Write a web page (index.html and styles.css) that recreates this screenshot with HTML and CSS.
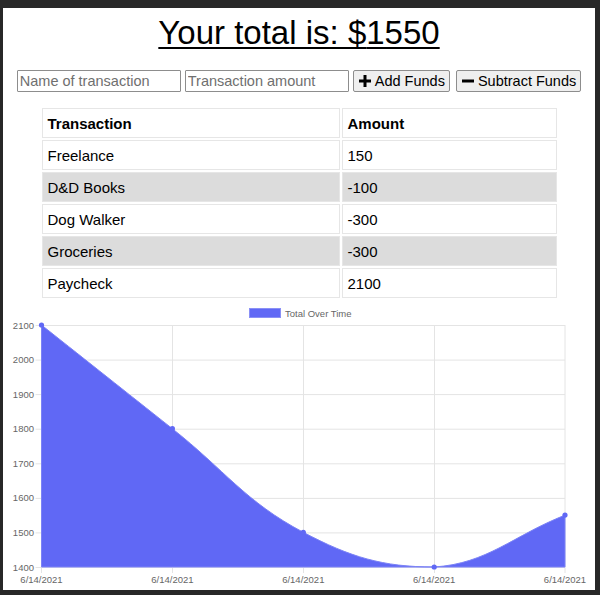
FILE: index.html
```html
<!DOCTYPE html>
<html lang="en">
<head>
<meta charset="utf-8">
<title>Budget Tracker</title>
<link rel="stylesheet" href="styles.css">
</head>
<body>
<div class="frame">
  <h1 class="total">Your total is: $<span class="amount">1550</span></h1>
  <div class="controls">
    <input class="field" type="text" placeholder="Name of transaction">
    <input class="field" type="number" placeholder="Transaction amount">
    <button class="btn btn-add"><svg class="ico" viewBox="0 0 12 12" width="12" height="12"><path d="M4.5 0h3v4.5H12v3H7.5V12h-3V7.5H0v-3h4.5z"/></svg>Add Funds</button>
    <button class="btn btn-sub"><svg class="ico" viewBox="0 0 12 12" width="12" height="12"><path d="M0 4.5h12v3H0z"/></svg>Subtract Funds</button>
  </div>
  <table class="tx">
    <thead>
      <tr><th class="c-name">Transaction</th><th class="c-amt">Amount</th></tr>
    </thead>
    <tbody>
      <tr><td>Freelance</td><td>150</td></tr>
      <tr><td>D&amp;D Books</td><td>-100</td></tr>
      <tr><td>Dog Walker</td><td>-300</td></tr>
      <tr><td>Groceries</td><td>-300</td></tr>
      <tr><td>Paycheck</td><td>2100</td></tr>
    </tbody>
  </table>
  <svg class="chart" width="592" height="290" viewBox="0 0 592 290">
    <g class="legend">
      <rect x="246.5" y="8.5" width="31" height="9" fill="#6068f5" stroke="#8a90f6" stroke-width="1"/>
      <text x="282" y="16.5" class="lbl">Total Over Time</text>
    </g>
    <g class="grid" stroke="#e4e4e4" stroke-width="1">
      <line x1="32.5" y1="25.5" x2="562" y2="25.5"/>
      <line x1="32.5" y1="60.1" x2="562" y2="60.1"/>
      <line x1="32.5" y1="94.6" x2="562" y2="94.6"/>
      <line x1="32.5" y1="129.2" x2="562" y2="129.2"/>
      <line x1="32.5" y1="163.8" x2="562" y2="163.8"/>
      <line x1="32.5" y1="198.4" x2="562" y2="198.4"/>
      <line x1="32.5" y1="232.9" x2="562" y2="232.9"/>
      <line x1="32.5" y1="267.5" x2="562" y2="267.5"/>
      <line x1="38.5" y1="25" x2="38.5" y2="273"/>
      <line x1="169.5" y1="25" x2="169.5" y2="273"/>
      <line x1="300.5" y1="25" x2="300.5" y2="273"/>
      <line x1="431.5" y1="25" x2="431.5" y2="273"/>
      <line x1="562" y1="25" x2="562" y2="273"/>
    </g>
    <path d="M38.5,25 C90.86,66.48 117.04,87.24 169.4,128.7 C221.76,170.16 242.5,201.76 300.3,232.3 C347.2,257.08 379.85,267 431.2,267 C484.53,263.49 509.68,235.86 562,215.1 L562,267 L38.5,267 Z" fill="#6068f5" stroke="#7c83f6" stroke-width="1"/>
    <g fill="#6068f5">
      <circle cx="38.5" cy="25" r="2.6"/>
      <circle cx="169.4" cy="128.7" r="2.6"/>
      <circle cx="300.3" cy="232.3" r="2.6"/>
      <circle cx="431.2" cy="267" r="2.6"/>
      <circle cx="562" cy="215.1" r="2.6"/>
    </g>
    <g class="ylabels">
      <text x="31" y="28.5">2100</text>
      <text x="31" y="63.1">2000</text>
      <text x="31" y="97.6">1900</text>
      <text x="31" y="132.2">1800</text>
      <text x="31" y="166.8">1700</text>
      <text x="31" y="201.4">1600</text>
      <text x="31" y="235.9">1500</text>
      <text x="31" y="270.5">1400</text>
    </g>
    <g class="xlabels">
      <text x="38.5" y="282.5">6/14/2021</text>
      <text x="169.4" y="282.5">6/14/2021</text>
      <text x="300.3" y="282.5">6/14/2021</text>
      <text x="431.2" y="282.5">6/14/2021</text>
      <text x="562" y="282.5">6/14/2021</text>
    </g>
  </svg>
</div>
</body>
</html>
```

FILE: styles.css
```css
html, body {
  margin: 0;
  padding: 0;
}
body {
  background: #282828;
  font-family: "Liberation Sans", Arial, Helvetica, sans-serif;
  color: #000;
  width: 600px;
  height: 595px;
  overflow: hidden;
}
.frame {
  margin: 8px 5px 0 3px;
  width: 592px;
  height: 582px;
  background: #fff;
  display: flex;
  flex-direction: column;
  align-items: center;
  overflow: hidden;
}
.total {
  margin: 6px 0 0;
  font-size: 33px;
  line-height: 37px;
  font-weight: normal;
  text-decoration: underline;
  text-decoration-thickness: 2px;
  text-underline-offset: 3px;
  text-align: center;
}
.controls {
  margin-top: 19px;
  display: flex;
  gap: 4px;
  align-items: center;
}
.field {
  box-sizing: border-box;
  width: 164px;
  height: 22px;
  padding: 1px 2px;
  border: 1px solid #8d8d8d;
  border-radius: 1px;
  font-family: inherit;
  font-size: 14.5px;
  color: #000;
  background: #fff;
}
.field::placeholder {
  color: #6f6f6f;
}
.field::-webkit-outer-spin-button,
.field::-webkit-inner-spin-button {
  -webkit-appearance: none;
  margin: 0;
}
.field[type=number] {
  -moz-appearance: textfield;
}
.btn {
  box-sizing: border-box;
  height: 22px;
  padding: 0 4px 0 5px;
  border: 1px solid #8d8d8d;
  border-radius: 2px;
  background: #efefef;
  font-family: inherit;
  font-size: 14.5px;
  color: #000;
  display: flex;
  align-items: center;
  gap: 4px;
  white-space: nowrap;
}
.btn-sub {
  margin-left: 2px;
}
.ico {
  display: block;
  fill: #000;
  flex: none;
}
.tx {
  margin-top: 14px;
  width: 519px;
  border-collapse: separate;
  border-spacing: 2px;
  font-size: 15px;
}
.tx th,
.tx td {
  height: 30px;
  box-sizing: border-box;
  padding: 0 5px;
  border: 1px solid #e6e6e6;
  text-align: left;
  vertical-align: middle;
}
.tx th {
  font-weight: bold;
}
.c-name {
  width: 298px;
}
.tx tbody tr:nth-child(even) td {
  background: #dcdcdc;
}
.chart {
  display: block;
  flex: none;
  font-family: "Liberation Sans", Arial, Helvetica, sans-serif;
}
.lbl {
  font-size: 9.5px;
  fill: #666;
}
.ylabels text {
  font-size: 9.5px;
  fill: #666;
  text-anchor: end;
}
.xlabels text {
  font-size: 9.5px;
  fill: #666;
  text-anchor: middle;
}
```
